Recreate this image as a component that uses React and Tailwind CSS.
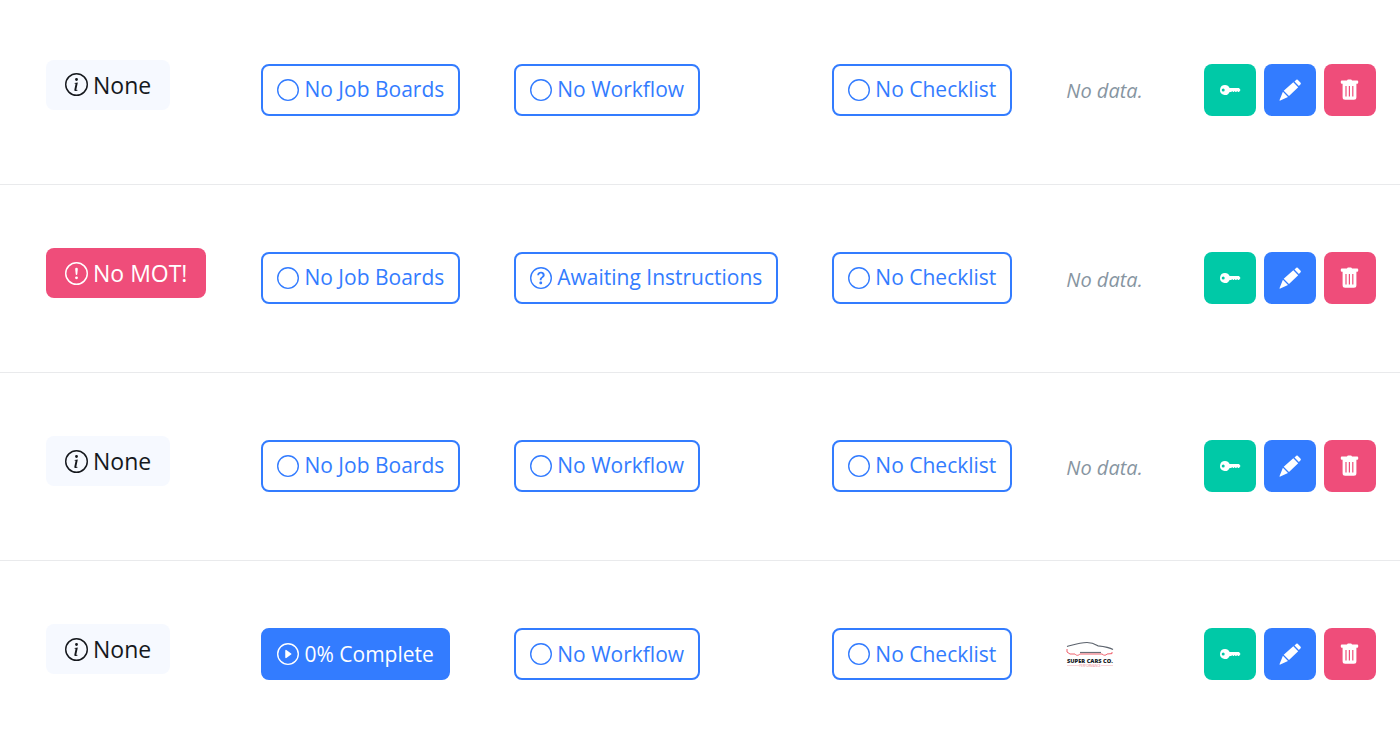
import { BsCircle, BsExclamationCircle, BsInfoCircle, BsPlayCircle, BsQuestionCircle } from 'react-icons/bs';

const rows = [
    { id: 1, mot: 'none', board: 'empty', workflow: 'empty', client: null },
    { id: 2, mot: 'missing', board: 'empty', workflow: 'awaiting', client: null },
    { id: 3, mot: 'none', board: 'empty', workflow: 'empty', client: null },
    { id: 4, mot: 'none', board: 'started', workflow: 'empty', client: 'super-cars' },
];

function KeyIcon() {
    return (
        <svg viewBox="0 0 24 24" className="size-6" fill="currentColor" aria-hidden="true">
            <path
                fillRule="evenodd"
                d="M7 7a5 5 0 0 1 4.600 3H21l1.500 2-1.500 2h-1l-.8-1-.9 1h-.8l-.8-1-.9 1h-.8l-.8-1-.9 1h-1.700A5 5 0 1 1 7 7ZM5.200 10.500a1.500 1.500 0 1 0 0 3 1.500 1.500 0 0 0 0-3Z"
            />
        </svg>
    );
}

function PencilIcon() {
    return (
        <svg viewBox="0 0 24 24" className="size-6" fill="currentColor" aria-hidden="true">
            <path d="M18.300 1.800q.7-.6 1.400 0l2.900 3q.6.700 0 1.400L20.900 8 16.500 3.600ZM15.300 4.300 20.200 9.200 11 18 5.700 12.700ZM4.900 13.800 10 18.900 2.300 22.600q-1 .2-.7-.7Z" />
        </svg>
    );
}

function TrashIcon() {
    return (
        <svg viewBox="0 0 24 24" className="size-6" fill="currentColor" aria-hidden="true">
            <path
                fillRule="evenodd"
                d="M9 2.500q.3-1 1.200-1h2.600q.9 0 1.200 1h5.200q1 0 1 1v1.300q0 .9-1 .9h-.8v13.600q0 2.500-2.500 2.500H7.100q-2.500 0-2.500-2.500V5.700h-.8q-1 0-1-.9V3.500q0-1 1-1ZM7.400 8v10.500h1.200V8Zm3.400 0v10.500H12V8Zm3.400 0v10.500h1.200V8Z"
            />
        </svg>
    );
}

function SuperCarsLogo() {
    return (
        <svg viewBox="0 0 48 26" className="h-[26px] w-12" role="img" aria-label="Super Cars Co.">
            <path d="M1 5.500C8 3.600 14 1.500 21 1.500c6 0 8 1.500 11 3.300 5 .5 11 1.200 15 3.600" fill="none" stroke="#5b626c" strokeWidth="1.200" />
            <path d="M14 11.500h21" fill="none" stroke="#6b7078" strokeWidth="1.200" />
            <path d="M1 8v3l3 2h5c1.500 2 3.500 1.500 5 0h22c2 1.800 4 1.500 5 0l5-.4V11" fill="none" stroke="#f0606c" strokeWidth="1" />
            <text x="24" y="22" textAnchor="middle" fontFamily="Open Sans, sans-serif" fontWeight="800" fontSize="5.700" fill="#15181d">SUPER CARS CO.</text>
            <path d="M1 24.500h12M35 24.500h12" stroke="#f8d4d8" strokeWidth="1" />
            <text x="24" y="26" textAnchor="middle" fontFamily="Open Sans, sans-serif" fontSize="3" fill="#f08890">PERFORMANCE</text>
        </svg>
    );
}

function MotBadge({ status }) {
    if (status === 'missing') {
        return (
            <span className="mb-[10px] inline-flex h-[50px] items-center gap-[5px] rounded-lg bg-[#ef4d7a] px-[19px] text-[23px] text-white">
                <BsExclamationCircle className="size-[23px]" />
                No MOT!
            </span>
        );
    }
    return (
        <span className="mb-[10px] inline-flex h-[50px] items-center gap-[5px] rounded-lg bg-[#f6f9ff] px-[19px] text-[23px] text-[#15181d]">
            <BsInfoCircle className="size-[23px]" />
            None
        </span>
    );
}

function StatusButton({ icon: Icon, filled, children }) {
    return (
        <button
            type="button"
            className={`flex h-[52px] items-center gap-[5px] rounded-lg border-2 border-[#337cff] px-[14px] text-[21px] ${filled ? 'bg-[#337cff] text-white' : 'bg-white text-[#337cff]'}`}
        >
            <Icon className="size-[22px]" />
            {children}
        </button>
    );
}

export default function App() {
    return (
        <main className="min-h-screen overflow-x-auto bg-white font-['Open_Sans',sans-serif]">
            <table className="w-full whitespace-nowrap">
                <tbody>
                    {rows.map((row) => (
                        <tr key={row.id} className="h-[188px] border-b border-[#e9eaec] first:h-[184px] last:border-b-0 first:[&>td]:pb-1">
                            <td className="pr-7 pl-[46px]">
                                <MotBadge status={row.mot} />
                            </td>

                            {/* Job boards */}
                            <td className="px-[27px]">
                                {row.board === 'started' ? (
                                    <StatusButton icon={BsPlayCircle} filled>0% Complete</StatusButton>
                                ) : (
                                    <StatusButton icon={BsCircle}>No Job Boards</StatusButton>
                                )}
                            </td>

                            {/* Workflow */}
                            <td className="px-[27px]">
                                {row.workflow === 'awaiting' ? (
                                    <StatusButton icon={BsQuestionCircle}>Awaiting Instructions</StatusButton>
                                ) : (
                                    <StatusButton icon={BsCircle}>No Workflow</StatusButton>
                                )}
                            </td>

                            <td className="px-[27px]">
                                <StatusButton icon={BsCircle}>No Checklist</StatusButton>
                            </td>

                            {/* Client */}
                            <td className="px-[27px]">
                                {row.client ? <SuperCarsLogo /> : <em className="block pt-[3px] text-xl text-[#8795a1]">No data.</em>}
                            </td>

                            {/* Actions */}
                            <td className="w-full pr-6 pl-[27px]">
                                <div className="flex justify-end gap-2 text-white">
                                    <button type="button" aria-label="Keys" className="flex size-[52px] items-center justify-center rounded-lg bg-[#00c9a7]">
                                        <KeyIcon />
                                    </button>
                                    <button type="button" aria-label="Edit" className="flex size-[52px] items-center justify-center rounded-lg bg-[#337cff]">
                                        <PencilIcon />
                                    </button>
                                    <button type="button" aria-label="Delete" className="flex size-[52px] items-center justify-center rounded-lg bg-[#ef4d7a]">
                                        <TrashIcon />
                                    </button>
                                </div>
                            </td>
                        </tr>
                    ))}
                </tbody>
            </table>
        </main>
    );
}
